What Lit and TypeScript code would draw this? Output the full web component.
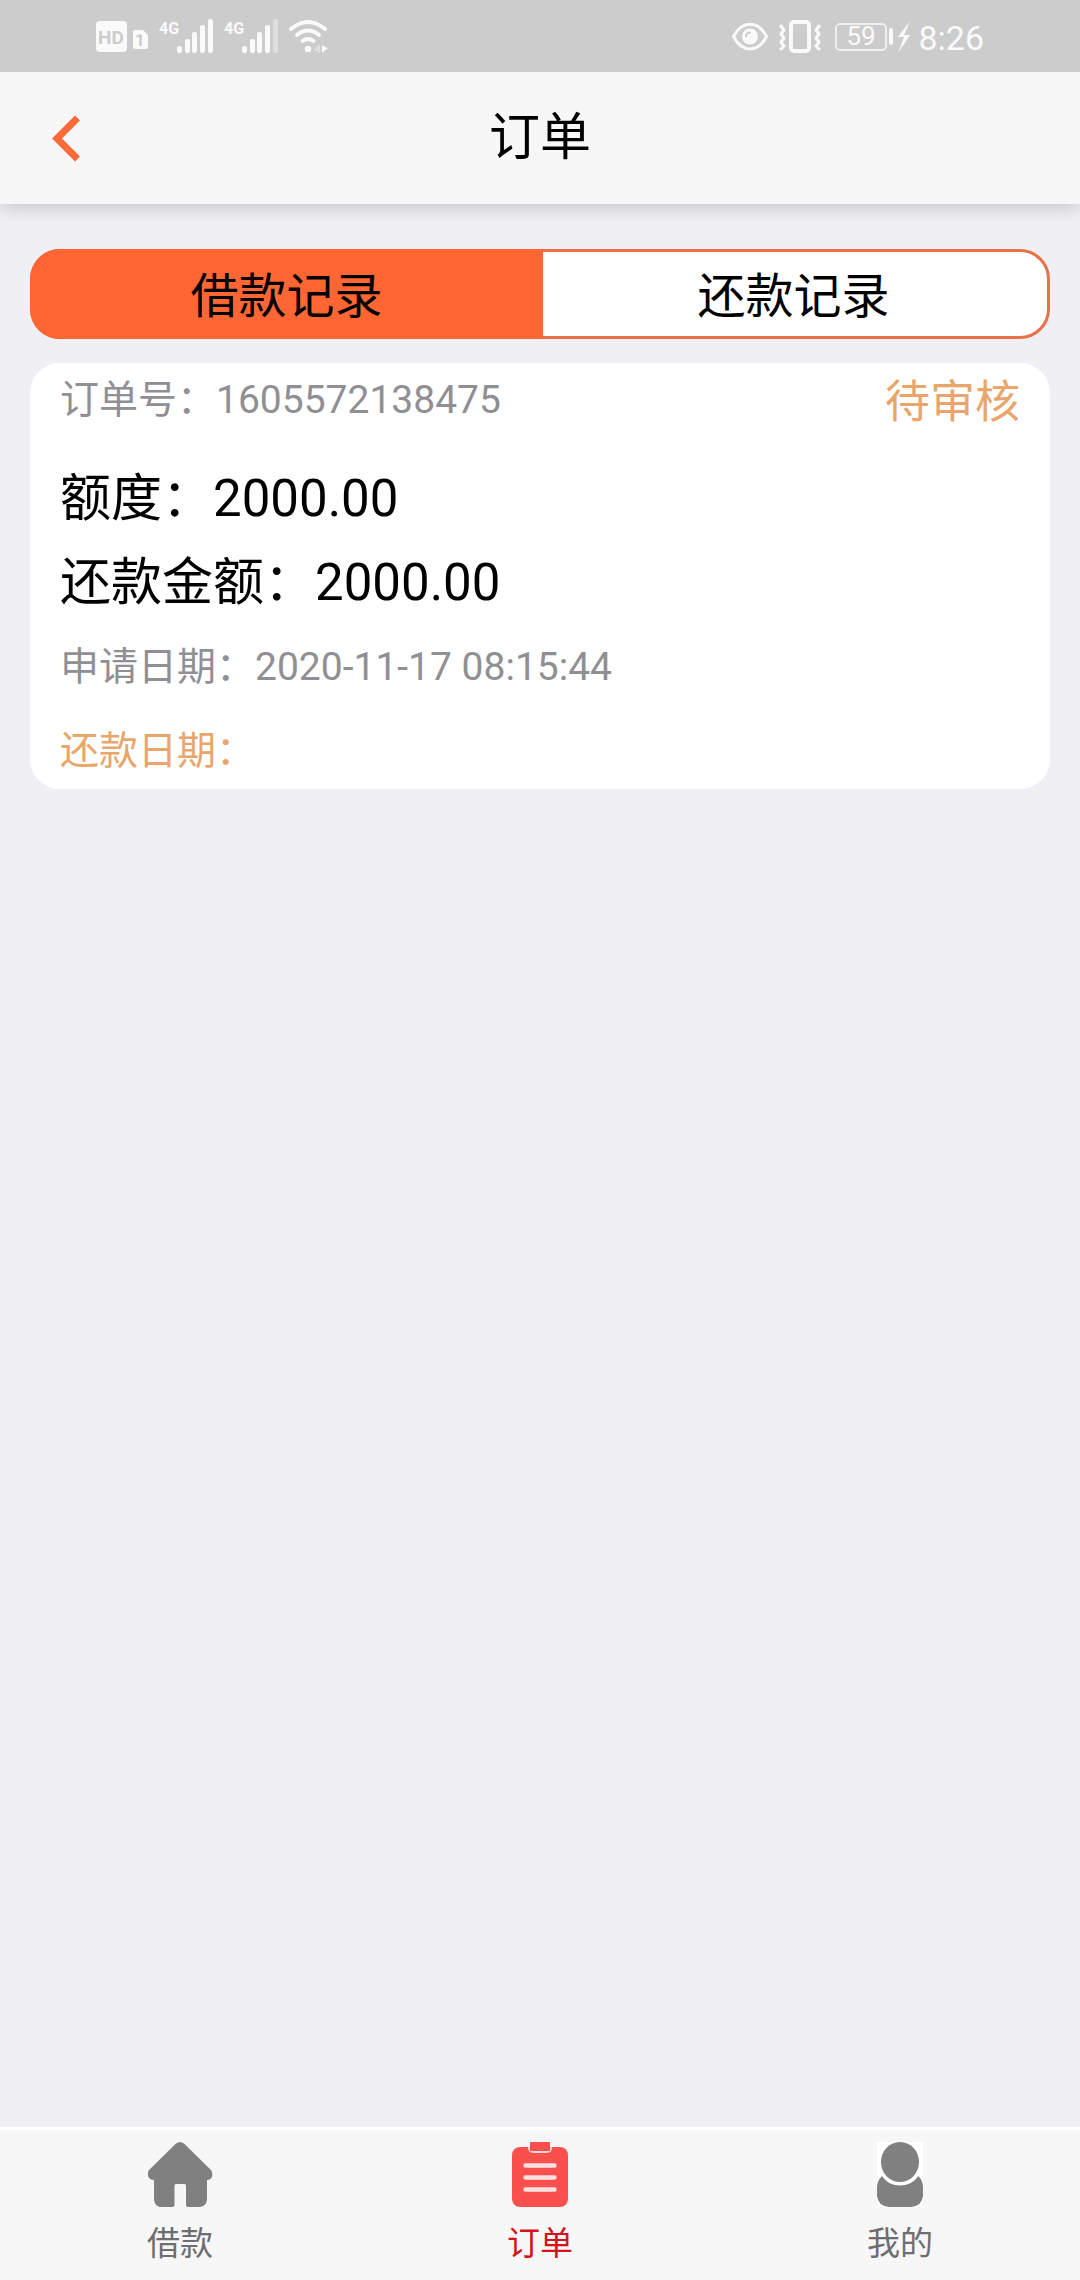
import { LitElement, html, css, svg, nothing } from "lit";
import { customElement, property, state } from "lit/decorators.js";
import { classMap } from "lit/directives/class-map.js";

@customElement("status-bar")
class StatusBar extends LitElement {
  static styles = css`
    :host {
      display: flex;
      justify-content: space-between;
      align-items: center;
      height: 72px;
      padding: 0 96px;
      background: #cccccc;
      color: #fafafa;
      font-family: Roboto, "Noto Sans CJK SC", sans-serif;
    }
    .group {
      display: flex;
      align-items: center;
      gap: 11px;
    }
    .sims {
      display: flex;
      align-items: center;
      gap: 6px;
    }
    svg {
      display: block;
      fill: currentColor;
    }
    .cut {
      fill: #cccccc;
      font-weight: 700;
    }
    .hd {
      font-size: 19px;
    }
    .sim {
      font-size: 17px;
    }
    .net {
      font-size: 16px;
      font-weight: 700;
    }
    .faint {
      opacity: 0.4;
    }
    .line {
      fill: none;
      stroke: currentColor;
      stroke-linecap: round;
      stroke-linejoin: round;
    }
    .level {
      font-size: 26px;
    }
    .power {
      display: flex;
      align-items: center;
      gap: 8px;
    }
    .clock {
      padding-top: 4px;
      font-size: 34px;
      line-height: 40px;
    }
  `;

  private signal(bars: number) {
    return html`<svg width="54" height="36" viewBox="0 0 54 36">
      <text class="net" x="0" y="16">4G</text>
      ${[7, 14, 21, 28, 34].map(
        (h, i) =>
          svg`<rect class=${i < bars ? "" : "faint"} x=${18 + i * 8 - (i > 1 ? 1 : 0)} y=${35 - h} width="5" height=${h} rx="2"></rect>`
      )}
    </svg>`;
  }

  render() {
    return html`
      <div class="group">
        <div class="sims">
          <svg width="31" height="36" viewBox="0 0 31 36">
            <rect y="3" width="31" height="31" rx="4"></rect>
            <text class="cut hd" x="15" y="26" text-anchor="middle">HD</text>
          </svg>
          <svg width="15" height="36" viewBox="0 0 15 36">
            <path d="M2 12h8l5 5v12a2 2 0 0 1-2 2H2a2 2 0 0 1-2-2V14a2 2 0 0 1 2-2z"></path>
            <text class="cut sim" x="7" y="28" text-anchor="middle">1</text>
          </svg>
        </div>
        ${this.signal(5)} ${this.signal(4)}
        <svg width="40" height="36" viewBox="0 0 40 36">
          <g class="line" stroke-width="4">
            <path d="M2 11Q19-3 36 11"></path>
            <path d="M8 17Q19 8 30 17"></path>
            <path d="M13.500 23Q19 19 24.500 23"></path>
          </g>
          <circle cx="19" cy="31" r="3.300"></circle>
          <path class="faint" d="M31 27v8h-2v-2h-4v-2l4-4z"></path>
          <path d="M33 27v8l6-5-3-1z"></path>
        </svg>
      </div>
      <div class="group">
        <svg width="36" height="36" viewBox="0 0 36 36">
          <path class="line" stroke-width="3" d="M1.500 18.500C10 2 26 2 34.500 18.500C26 35 10 35 1.500 18.500z"></path>
          <circle cx="18" cy="18.500" r="8"></circle>
          <path d="M14 18.500a4 4 0 0 1 4-4" fill="none" stroke="#cccccc" stroke-width="2" stroke-linecap="round"></path>
        </svg>
        <svg width="42" height="36" viewBox="0 0 42 36">
          <rect class="line" x="12" y="4" width="18" height="29" rx="3" stroke-width="4"></rect>
          <g class="line" stroke-width="3">
            <path d="M2 8l3 4-3 4 3 4-3 4 3 4-3 3"></path>
            <path d="M40 8l-3 4 3 4-3 4 3 4-3 4 3 3"></path>
          </g>
        </svg>
        <div class="power">
          <svg width="78" height="38" viewBox="0 0 78 38">
            <rect class="line" x="4" y="7" width="50" height="26" rx="4" stroke-width="1.500"></rect>
            <text class="level" x="29" y="28" text-anchor="middle">59</text>
            <rect x="57" y="11" width="4" height="17" rx="2"></rect>
            <path d="M78 4L66 20h6l-6 16L78 18h-6z"></path>
          </svg>
          <div class="clock">8:26</div>
        </div>
      </div>
    `;
  }
}

interface Order {
  id: string;
  status: string;
  amount: string;
  repay: string;
  applied: string;
  due: string;
}

@customElement("order-card")
class OrderCard extends LitElement {
  @property({ attribute: false }) order!: Order;

  static styles = css`
    :host {
      display: block;
    }
    .card {
      display: flex;
      flex-direction: column;
      gap: 24px;
      padding: 10px 30px 8px;
      border-radius: 30px;
      background: #ffffff;
      line-height: 60px;
    }
    .head {
      display: flex;
      justify-content: space-between;
      align-items: flex-start;
      padding-bottom: 12px;
    }
    .row {
      margin: 0;
      font-size: 39px;
      color: #8f8f94;
    }
    .head .row {
      line-height: 54px;
    }
    .amount {
      font-size: 51px;
      color: #000000;
    }
    .status {
      font-size: 45px;
      color: #e9a66c;
    }
    .due {
      color: #e9a66c;
    }
  `;

  render() {
    const o = this.order;
    return html`
      <article class="card">
        <div class="head">
          <p class="row">订单号：${o.id}</p>
          <span class="status">${o.status}</span>
        </div>
        <p class="row amount">额度：${o.amount}</p>
        <p class="row amount">还款金额：${o.repay}</p>
        <p class="row">申请日期：${o.applied}</p>
        <p class="row due">还款日期：${o.due}</p>
      </article>
    `;
  }
}

const homeIcon = html`<svg width="66" height="66" viewBox="0 0 66 66" fill="#808080" aria-hidden="true">
  <path
    d="M29 1.500Q33-1.500 37 1.500L64 28Q66 31 65 35Q63.500 38 60 38V58Q59 64 53 65H41Q39 65 39 63V43.500Q39 42 37.500 42H29Q27.500 42 27.500 43.500V63Q27.500 65 25.500 65H13Q8 64 7 58V38Q3 38 1.500 35Q0 31 2 28z"
  ></path>
</svg>`;

const orderIcon = html`<svg width="66" height="66" viewBox="0 0 66 66" aria-hidden="true">
  <rect x="5" y="5" width="56" height="60" rx="8" fill="#fa504d"></rect>
  <path d="M21 3V7Q22 11 27 11H39Q44 11 45 7V3z" fill="#fbd5d4"></path>
  <rect x="21" y="0" width="24" height="5" fill="#f7f7f7"></rect>
  <rect x="23" y="0" width="20" height="9" rx="1" fill="#fa504d"></rect>
  <path d="M18.500 23.500h29M18.500 35.500h29M18.500 47.500h29" stroke="#fde0df" stroke-width="4.500" stroke-linecap="round"></path>
</svg>`;

const mineIcon = html`<svg width="46" height="66" viewBox="0 0 46 66" aria-hidden="true">
  <rect width="46" height="65" fill="#ffffff"></rect>
  <path
    d="M5 34Q11 43.500 23 43.500Q35 43.500 41.500 34Q46 39 46 46V54Q45 64 34 65H12Q1 64 0 54V46Q0 39 5 34z"
    fill="#808080"
  ></path>
  <ellipse cx="23" cy="20" rx="19" ry="20" fill="#808080"></ellipse>
</svg>`;

@customElement("app-root")
class AppRoot extends LitElement {
  @state() private tab = 0;

  private tabs = ["借款记录", "还款记录"];

  private orders: Order[] = [
    {
      id: "1605572138475",
      status: "待审核",
      amount: "2000.00",
      repay: "2000.00",
      applied: "2020-11-17 08:15:44",
      due: "",
    },
  ];

  private nav = [
    { label: "借款", icon: homeIcon },
    { label: "订单", icon: orderIcon, current: true },
    { label: "我的", icon: mineIcon },
  ];

  static styles = css`
    :host {
      display: flex;
      flex-direction: column;
      min-height: 100vh;
      background: #efeff4;
      color: #000000;
      font-family: Roboto, "Noto Sans CJK SC", sans-serif;
    }
    .bar {
      display: grid;
      grid-template-columns: 1fr auto 1fr;
      align-items: center;
      height: 132px;
      background: #f7f7f7;
      box-shadow: 0 3px 18px rgba(0, 0, 0, 0.18);
      clip-path: inset(0 0 -30px 0);
    }
    .back {
      justify-self: start;
      padding: 12px 48px;
      border: 0;
      background: none;
    }
    .back svg {
      display: block;
    }
    .title {
      margin: 0;
      font-size: 51px;
      font-weight: 400;
      line-height: 72px;
    }
    main {
      flex: 1;
      display: flex;
      flex-direction: column;
      gap: 24px;
      padding: 45px 30px;
    }
    .tabs {
      display: flex;
      border: 3px solid #e8714a;
      border-radius: 30px;
      background: #ffffff;
    }
    .tab {
      flex: 1;
      height: 84px;
      padding: 6px 0 0;
      border: 0;
      background: none;
      color: #000000;
      font: inherit;
      font-size: 48px;
      line-height: 78px;
    }
    .tab:first-child {
      border-radius: 27px 0 0 27px;
    }
    .tab:last-child {
      border-radius: 0 27px 27px 0;
    }
    .tab.on {
      background: #ff6634;
      box-shadow: 0 0 0 3px #ff6634;
    }
    .nav {
      display: flex;
      border-top: 3px solid #ffffff;
      background: #f7f7f7;
    }
    .item {
      flex: 1;
      display: flex;
      flex-direction: column;
      align-items: center;
      gap: 12px;
      padding: 12px 0;
      color: #6d6d72;
      font-size: 33px;
      line-height: 48px;
      text-decoration: none;
    }
    .item.current {
      color: #d5131a;
    }
    .item svg {
      display: block;
    }
  `;

  render() {
    return html`
      <status-bar></status-bar>
      <header class="bar">
        <button class="back" aria-label="返回">
          <svg width="36" height="48" viewBox="0 0 36 48" fill="none" stroke="#fb6a38" stroke-width="7">
            <path d="M29.500 4L9 24.500L29.500 45"></path>
          </svg>
        </button>
        <h1 class="title">订单</h1>
      </header>
      <main>
        <div class="tabs" role="tablist">
          ${this.tabs.map(
            (name, i) => html`<button
              class=${classMap({ tab: true, on: this.tab === i })}
              role="tab"
              aria-selected=${this.tab === i}
              @click=${() => (this.tab = i)}
            >
              ${name}
            </button>`
          )}
        </div>
        ${this.tab === 0 ? this.orders.map((o) => html`<order-card .order=${o}></order-card>`) : nothing}
      </main>
      <nav class="nav">
        ${this.nav.map(
          (n) => html`<a class=${classMap({ item: true, current: !!n.current })} href="#">${n.icon}<span>${n.label}</span></a>`
        )}
      </nav>
    `;
  }
}
